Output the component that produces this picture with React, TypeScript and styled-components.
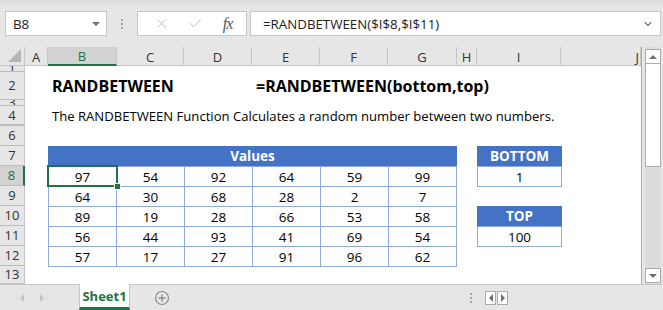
import styled, { createGlobalStyle } from "styled-components";
import { Check, ChevronDown, X } from "lucide-react";

const GlobalStyle = createGlobalStyle`
  html, body { margin: 0; padding: 0; background: #fff; }
  body { font-family: "Open Sans", "Noto Sans", sans-serif; overflow: hidden; }
  * { box-sizing: border-box; }
`;

const columns = [
  { key: "A", w: 23 },
  { key: "B", w: 69 },
  { key: "C", w: 67 },
  { key: "D", w: 68 },
  { key: "E", w: 68 },
  { key: "F", w: 68 },
  { key: "G", w: 69 },
  { key: "H", w: 20 },
  { key: "I", w: 84 },
  { key: "J", w: 80 },
];

const rows = [
  { n: 1, h: 6 },
  { n: 2, h: 28 },
  { n: 3, h: 6 },
  { n: 4, h: 19 },
  { n: 5, h: 1 },
  { n: 6, h: 20 },
  { n: 7, h: 20 },
  { n: 8, h: 20 },
  { n: 9, h: 20 },
  { n: 10, h: 20 },
  { n: 11, h: 20 },
  { n: 12, h: 20 },
  { n: 13, h: 18 },
];

const values = [
  [97, 54, 92, 64, 59, 99],
  [64, 30, 68, 28, 2, 7],
  [89, 19, 28, 66, 53, 58],
  [56, 44, 93, 41, 69, 54],
  [57, 17, 27, 91, 96, 62],
];

const Window = styled.div`
  width: 663px;
  height: 310px;
  display: flex;
  flex-direction: column;
  background: #e6e6e6;
`;

const FormulaBar = styled.div`
  height: 47px;
  display: flex;
  align-items: flex-start;
  padding: 11px 2px 0 5px;
  background: linear-gradient(#dcdcdc 0, #e6e6e6 6px);
`;

const Field = styled.div`
  height: 25px;
  background: #fff;
  border: 1px solid #c6c6c6;
  display: flex;
  align-items: center;
  font-size: 13.3px;
  color: #222;
`;

const NameBox = styled(Field)`
  width: 102px;
  padding: 0 6px 0 7px;
  justify-content: space-between;
`;

const DropTriangle = styled.span`
  width: 0;
  height: 0;
  border-left: 4px solid transparent;
  border-right: 4px solid transparent;
  border-top: 4px solid #6f6f6f;
`;

const Grip = styled.div`
  width: 30px;
  height: 25px;
  display: flex;
  flex-direction: column;
  align-items: center;
  justify-content: center;
  gap: 2px;
`;

const GripDot = styled.span`
  width: 2px;
  height: 2px;
  background: #a8a8a8;
`;

const FxButtons = styled(Field)`
  width: 110px;
  justify-content: space-around;
  padding: 0 4px 0 6px;
`;

const FxText = styled.span`
  font-family: "Liberation Serif", "DejaVu Serif", serif;
  font-style: italic;
  font-size: 16px;
  color: #555;
  letter-spacing: -1px;
`;

const FormulaInput = styled(Field)`
  flex: 1;
  margin-left: 3px;
  padding: 0 6px 0 12px;
  justify-content: space-between;
`;

const Main = styled.div`
  height: 237px;
  display: flex;
`;

const Sheet = styled.div`
  display: grid;
  grid-template-columns: 25px ${columns.map((c) => `${c.w}px`).join(" ")};
  grid-template-rows: 19px ${rows.map((r) => `${r.h}px`).join(" ")};
  background: #fff;
  border-right: 1px solid #ababab;
  overflow: hidden;
`;

const Corner = styled.div`
  grid-column: 1;
  grid-row: 1;
  background: #e6e6e6;
  border-right: 1px solid #c6c6c6;
  border-bottom: 1px solid #c6c6c6;
  position: relative;
  &::after {
    content: "";
    position: absolute;
    right: 3px;
    bottom: 3px;
    width: 0;
    height: 0;
    border-left: 13px solid transparent;
    border-bottom: 13px solid #b4b4b4;
  }
`;

const ColHead = styled.div<{ $col: number; $active?: boolean; $alignRight?: boolean }>`
  grid-row: 1;
  grid-column: ${({ $col }) => $col};
  background: ${({ $active }) => ($active ? "#d2d2d2" : "#e6e6e6")};
  border-right: 1px solid #c6c6c6;
  border-bottom: ${({ $active }) => ($active ? "2px solid #217346" : "1px solid #c6c6c6")};
  color: ${({ $active }) => ($active ? "#217346" : "#333")};
  font-size: 13px;
  display: flex;
  align-items: center;
  justify-content: ${({ $alignRight }) => ($alignRight ? "flex-end" : "center")};
  padding-right: ${({ $alignRight }) => ($alignRight ? "1px" : "0")};
  padding-top: 1px;
`;

const RowHead = styled.div<{ $row: number; $active?: boolean }>`
  grid-column: 1;
  grid-row: ${({ $row }) => $row};
  background: ${({ $active }) => ($active ? "#d2d2d2" : "#e6e6e6")};
  border-right: ${({ $active }) => ($active ? "2px solid #217346" : "1px solid #c6c6c6")};
  border-bottom: 1px solid #bdbdbd;
  color: ${({ $active }) => ($active ? "#217346" : "#333")};
  font-size: 13px;
  line-height: 1;
  display: flex;
  align-items: center;
  justify-content: center;
  overflow: hidden;
`;

const CellText = styled.div<{ $col: number; $row: number; $bold?: boolean; $size: number }>`
  grid-column: ${({ $col }) => $col} / -1;
  grid-row: ${({ $row }) => $row};
  font-size: ${({ $size }) => $size}px;
  font-weight: ${({ $bold }) => ($bold ? 700 : 400)};
  color: #000;
  white-space: nowrap;
  display: flex;
  align-items: center;
  padding-left: 4px;
  z-index: 1;
`;

const Table = styled.div<{ $col: string; $row: string; $cols: string }>`
  grid-column: ${({ $col }) => $col};
  grid-row: ${({ $row }) => $row};
  align-self: start;
  justify-self: start;
  display: grid;
  grid-template-columns: ${({ $cols }) => $cols};
  grid-auto-rows: 19px;
  gap: 1px;
  padding: 1px;
  background: #8ea9db;
  z-index: 1;
`;

const TableHead = styled.div`
  grid-column: 1 / -1;
  background: #4472c4;
  margin: -1px -1px 0;
  color: #fff;
  font-weight: 700;
  font-size: 13.5px;
  display: flex;
  align-items: center;
  justify-content: center;
`;

const TableCell = styled.div`
  background: #fff;
  font-size: 13.5px;
  color: #000;
  display: flex;
  align-items: center;
  justify-content: center;
  padding-top: 1px;
`;

const Selection = styled.div`
  grid-column: 3;
  grid-row: 9;
  margin: -1px;
  border: 2px solid #217346;
  position: relative;
  z-index: 2;
`;

const FillHandle = styled.span`
  position: absolute;
  right: -5px;
  bottom: -5px;
  width: 7px;
  height: 7px;
  background: #217346;
  border: 1px solid #fff;
`;

const VScroll = styled.div`
  width: 16px;
  margin-left: 3px;
  padding-top: 2px;
  padding-bottom: 1px;
  display: flex;
  flex-direction: column;
  background: #dcdcdc;
`;

const ScrollButton = styled.div`
  height: 15px;
  background: #fff;
  border: 1px solid #ababab;
  display: flex;
  align-items: center;
  justify-content: center;
`;

const ArrowUp = styled.span`
  width: 0;
  height: 0;
  border-left: 4px solid transparent;
  border-right: 4px solid transparent;
  border-bottom: 4px solid #6f6f6f;
`;

const ArrowDown = styled(ArrowUp)`
  border-bottom: none;
  border-top: 4px solid #6f6f6f;
`;

const Thumb = styled.div`
  height: 103px;
  background: #fff;
  border: 1px solid #ababab;
  border-top: none;
`;

const Track = styled.div`
  flex: 1;
`;

const TabBar = styled.div`
  height: 26px;
  display: flex;
  align-items: stretch;
  background: #e6e6e6;
  border-top: 1px solid #c6c6c6;
`;

const NavArrows = styled.div`
  width: 79px;
  display: flex;
  align-items: center;
  padding-left: 20px;
  gap: 16px;
`;

const NavTriangle = styled.span<{ $dir: "left" | "right" }>`
  width: 0;
  height: 0;
  border-top: 4px solid transparent;
  border-bottom: 4px solid transparent;
  ${({ $dir }) => ($dir === "left" ? "border-right: 4px solid #c4c4c4;" : "border-left: 4px solid #c4c4c4;")}
`;

const SheetTab = styled.div`
  width: 51px;
  margin-top: -1px;
  background: #fff;
  border-left: 1px solid #c6c6c6;
  border-right: 1px solid #c6c6c6;
  border-bottom: 3px solid #217346;
  color: #217346;
  font-weight: 700;
  font-size: 13px;
  display: flex;
  align-items: center;
  justify-content: center;
  padding-top: 1px;
`;

const AddSheet = styled.div`
  width: 64px;
  display: flex;
  align-items: center;
  justify-content: center;
`;

const TabSpacer = styled.div`
  flex: 1;
`;

const MoreDots = styled(Grip)`
  width: 14px;
  height: auto;
`;

const HScrollButtons = styled.div`
  display: flex;
  align-items: center;
  margin-right: 155px;
  margin-left: 7px;
`;

const HButton = styled.div`
  width: 11px;
  height: 14px;
  background: #fff;
  border: 1px solid #ababab;
  display: flex;
  align-items: center;
  justify-content: center;
  & + & {
    margin-left: 1px;
  }
`;

const HTriangle = styled(NavTriangle)`
  ${({ $dir }) => ($dir === "left" ? "border-right-color: #6f6f6f;" : "border-left-color: #6f6f6f;")}
`;

export default function App() {
  return (
    <>
      <GlobalStyle />
      <Window>
        <FormulaBar>
          <NameBox>
            <span>B8</span>
            <DropTriangle />
          </NameBox>
          <Grip>
            <GripDot />
            <GripDot />
            <GripDot />
          </Grip>
          <FxButtons>
            <X size={15} strokeWidth={1.3} color="#b8b8b8" />
            <Check size={15} strokeWidth={1.5} color="#b8b8b8" />
            <FxText>fx</FxText>
          </FxButtons>
          <FormulaInput>
            <span>=RANDBETWEEN($I$8,$I$11)</span>
            <ChevronDown size={12} strokeWidth={2.2} color="#777" />
          </FormulaInput>
        </FormulaBar>

        <Main>
          <Sheet>
            <Corner />
            {columns.map((c, i) => (
              <ColHead key={c.key} $col={i + 2} $active={c.key === "B"} $alignRight={c.key === "J"}>
                {c.key}
              </ColHead>
            ))}
            {rows.map((r, i) => (
              <RowHead key={r.n} $row={i + 2} $active={r.n === 8}>
                {r.h > 1 ? r.n : null}
              </RowHead>
            ))}

            <CellText $col={3} $row={3} $bold $size={16}>
              RANDBETWEEN
            </CellText>
            <CellText $col={6} $row={3} $bold $size={16}>
              =RANDBETWEEN(bottom,top)
            </CellText>
            <CellText $col={3} $row={5} $size={13.1}>
              The RANDBETWEEN Function Calculates a random number between two numbers.
            </CellText>

            <Table $col="3 / 9" $row="8 / 14" $cols="repeat(6, 67px)">
              <TableHead>Values</TableHead>
              {values.flat().map((v, i) => (
                <TableCell key={i}>{v}</TableCell>
              ))}
            </Table>
            <Selection>
              <FillHandle />
            </Selection>

            <Table $col="10" $row="8 / 10" $cols="83px">
              <TableHead>BOTTOM</TableHead>
              <TableCell>1</TableCell>
            </Table>
            <Table $col="10" $row="11 / 13" $cols="83px">
              <TableHead>TOP</TableHead>
              <TableCell>100</TableCell>
            </Table>
          </Sheet>
          <VScroll>
            <ScrollButton>
              <ArrowUp />
            </ScrollButton>
            <Thumb />
            <Track />
            <ScrollButton>
              <ArrowDown />
            </ScrollButton>
          </VScroll>
        </Main>

        <TabBar>
          <NavArrows>
            <NavTriangle $dir="left" />
            <NavTriangle $dir="right" />
          </NavArrows>
          <SheetTab>Sheet1</SheetTab>
          <AddSheet>
            <svg width="16" height="16" viewBox="0 0 16 16">
              <circle cx="8" cy="8" r="6.5" fill="none" stroke="#8c8c8c" strokeWidth="1.2" />
              <path d="M8 4.5v7M4.5 8h7" stroke="#8c8c8c" strokeWidth="1.4" />
            </svg>
          </AddSheet>
          <TabSpacer />
          <MoreDots>
            <GripDot />
            <GripDot />
            <GripDot />
          </MoreDots>
          <HScrollButtons>
            <HButton>
              <HTriangle $dir="left" />
            </HButton>
            <HButton>
              <HTriangle $dir="right" />
            </HButton>
          </HScrollButtons>
        </TabBar>
      </Window>
    </>
  );
}
